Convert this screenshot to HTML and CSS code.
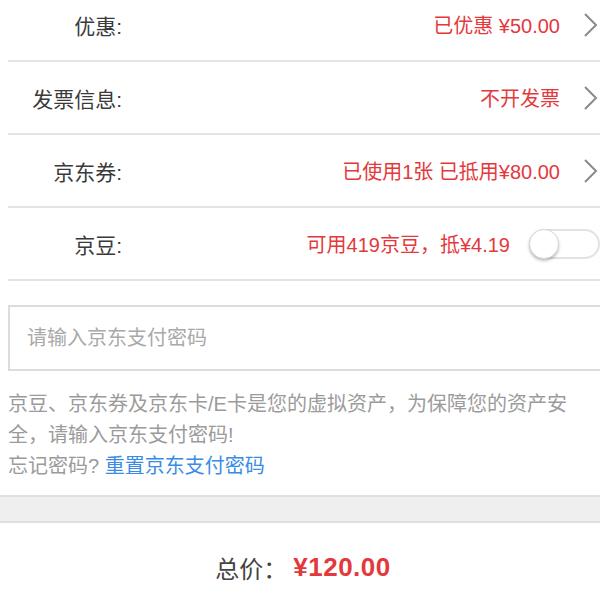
FILE: index.html
```html
<!DOCTYPE html>
<html lang="zh-CN">
<head>
    <meta charset="UTF-8">
    <title>确认订单</title>
    <link rel="stylesheet" href="styles.css">
</head>
<body>
    <div class="order-list">
        <div class="row">
            <span class="label">优惠:</span>
            <span class="value">已优惠 ¥50.00</span>
            <svg class="arrow" width="15" height="26" viewBox="0 0 15 26"><polyline points="2,2 13,13 2,24" /></svg>
        </div>
        <div class="row">
            <span class="label">发票信息:</span>
            <span class="value">不开发票</span>
            <svg class="arrow" width="15" height="26" viewBox="0 0 15 26"><polyline points="2,2 13,13 2,24" /></svg>
        </div>
        <div class="row">
            <span class="label">京东券:</span>
            <span class="value">已使用1张 已抵用¥80.00</span>
            <svg class="arrow" width="15" height="26" viewBox="0 0 15 26"><polyline points="2,2 13,13 2,24" /></svg>
        </div>
        <div class="row">
            <span class="label">京豆:</span>
            <span class="value value-beans">可用419京豆，抵¥4.19</span>
            <span class="switch"><span class="knob"></span></span>
        </div>
    </div>

    <div class="pwd-box">
        <input type="password" class="pwd-input" placeholder="请输入京东支付密码">
    </div>

    <p class="tips">
        京豆、京东券及京东卡/E卡是您的虚拟资产，为保障您的资产安全，请输入京东支付密码!<br>
        忘记密码? <a href="#" class="reset-link">重置京东支付密码</a>
    </p>

    <div class="gap"></div>

    <div class="total">
        <span class="total-label">总价：</span>
        <span class="total-price">¥120.00</span>
    </div>
</body>
</html>
```

FILE: styles.css
```css
body {
    margin: 0;
    width: 600px;
    overflow: hidden;
    background: #fff;
    font-family: "Liberation Sans", "Noto Sans CJK SC", sans-serif;
    color: #333;
}
.order-list {
    margin-top: -11px;
}
.row {
    display: flex;
    align-items: center;
    height: 73px;
    box-sizing: border-box;
    margin-left: 8px;
    border-bottom: 2px solid #e4e4e4;
    font-size: 20px;
}
.label {
    width: 114px;
    flex-shrink: 0;
    text-align: right;
    font-size: 21px;
    color: #3a3a3a;
}
.value {
    flex: 1;
    text-align: right;
    padding-right: 23px;
    color: #e4393c;
}
.value-beans {
    padding-right: 0;
}
.arrow {
    flex-shrink: 0;
    margin-right: 2px;
}
.arrow polyline {
    fill: none;
    stroke: #8a8a8a;
    stroke-width: 2;
}
.switch {
    position: relative;
    flex-shrink: 0;
    width: 71px;
    height: 30px;
    margin-left: 19px;
    box-sizing: border-box;
    border: 2px solid #e2e2e2;
    border-radius: 16px;
    background: #fff;
}
.knob {
    position: absolute;
    left: -2px;
    top: -2px;
    width: 30px;
    height: 30px;
    box-sizing: border-box;
    border-radius: 50%;
    background: #fff;
    border: 1px solid #d8d8d8;
    box-shadow: 0 2px 3px rgba(0,0,0,0.25);
}
.pwd-box {
    margin: 24px 0 0 8px;
}
.pwd-input {
    display: block;
    width: 592px;
    height: 66px;
    box-sizing: border-box;
    border: 2px solid #dcdcdc;
    border-right: none;
    padding: 0 0 0 17px;
    font-family: inherit;
    font-size: 20px;
    outline: none;
}
.pwd-input::placeholder {
    color: #a9a9a9;
}
.tips {
    margin: 18px 0 13px 8px;
    width: 570px;
    font-size: 20px;
    line-height: 31px;
    color: #9b9b9b;
}
.reset-link {
    color: #3a8be6;
    text-decoration: none;
}
.gap {
    height: 28px;
    box-sizing: border-box;
    background: #efefef;
    border-top: 2px solid #e0e0e0;
    border-bottom: 2px solid #e0e0e0;
}
.total {
    display: flex;
    justify-content: center;
    align-items: center;
    height: 88px;
    padding-left: 6px;
}
.total-label {
    font-size: 24px;
    color: #444;
    margin-right: 6px;
}
.total-price {
    font-size: 26px;
    letter-spacing: 0.5px;
    color: #e4393c;
    font-weight: bold;
}
```
